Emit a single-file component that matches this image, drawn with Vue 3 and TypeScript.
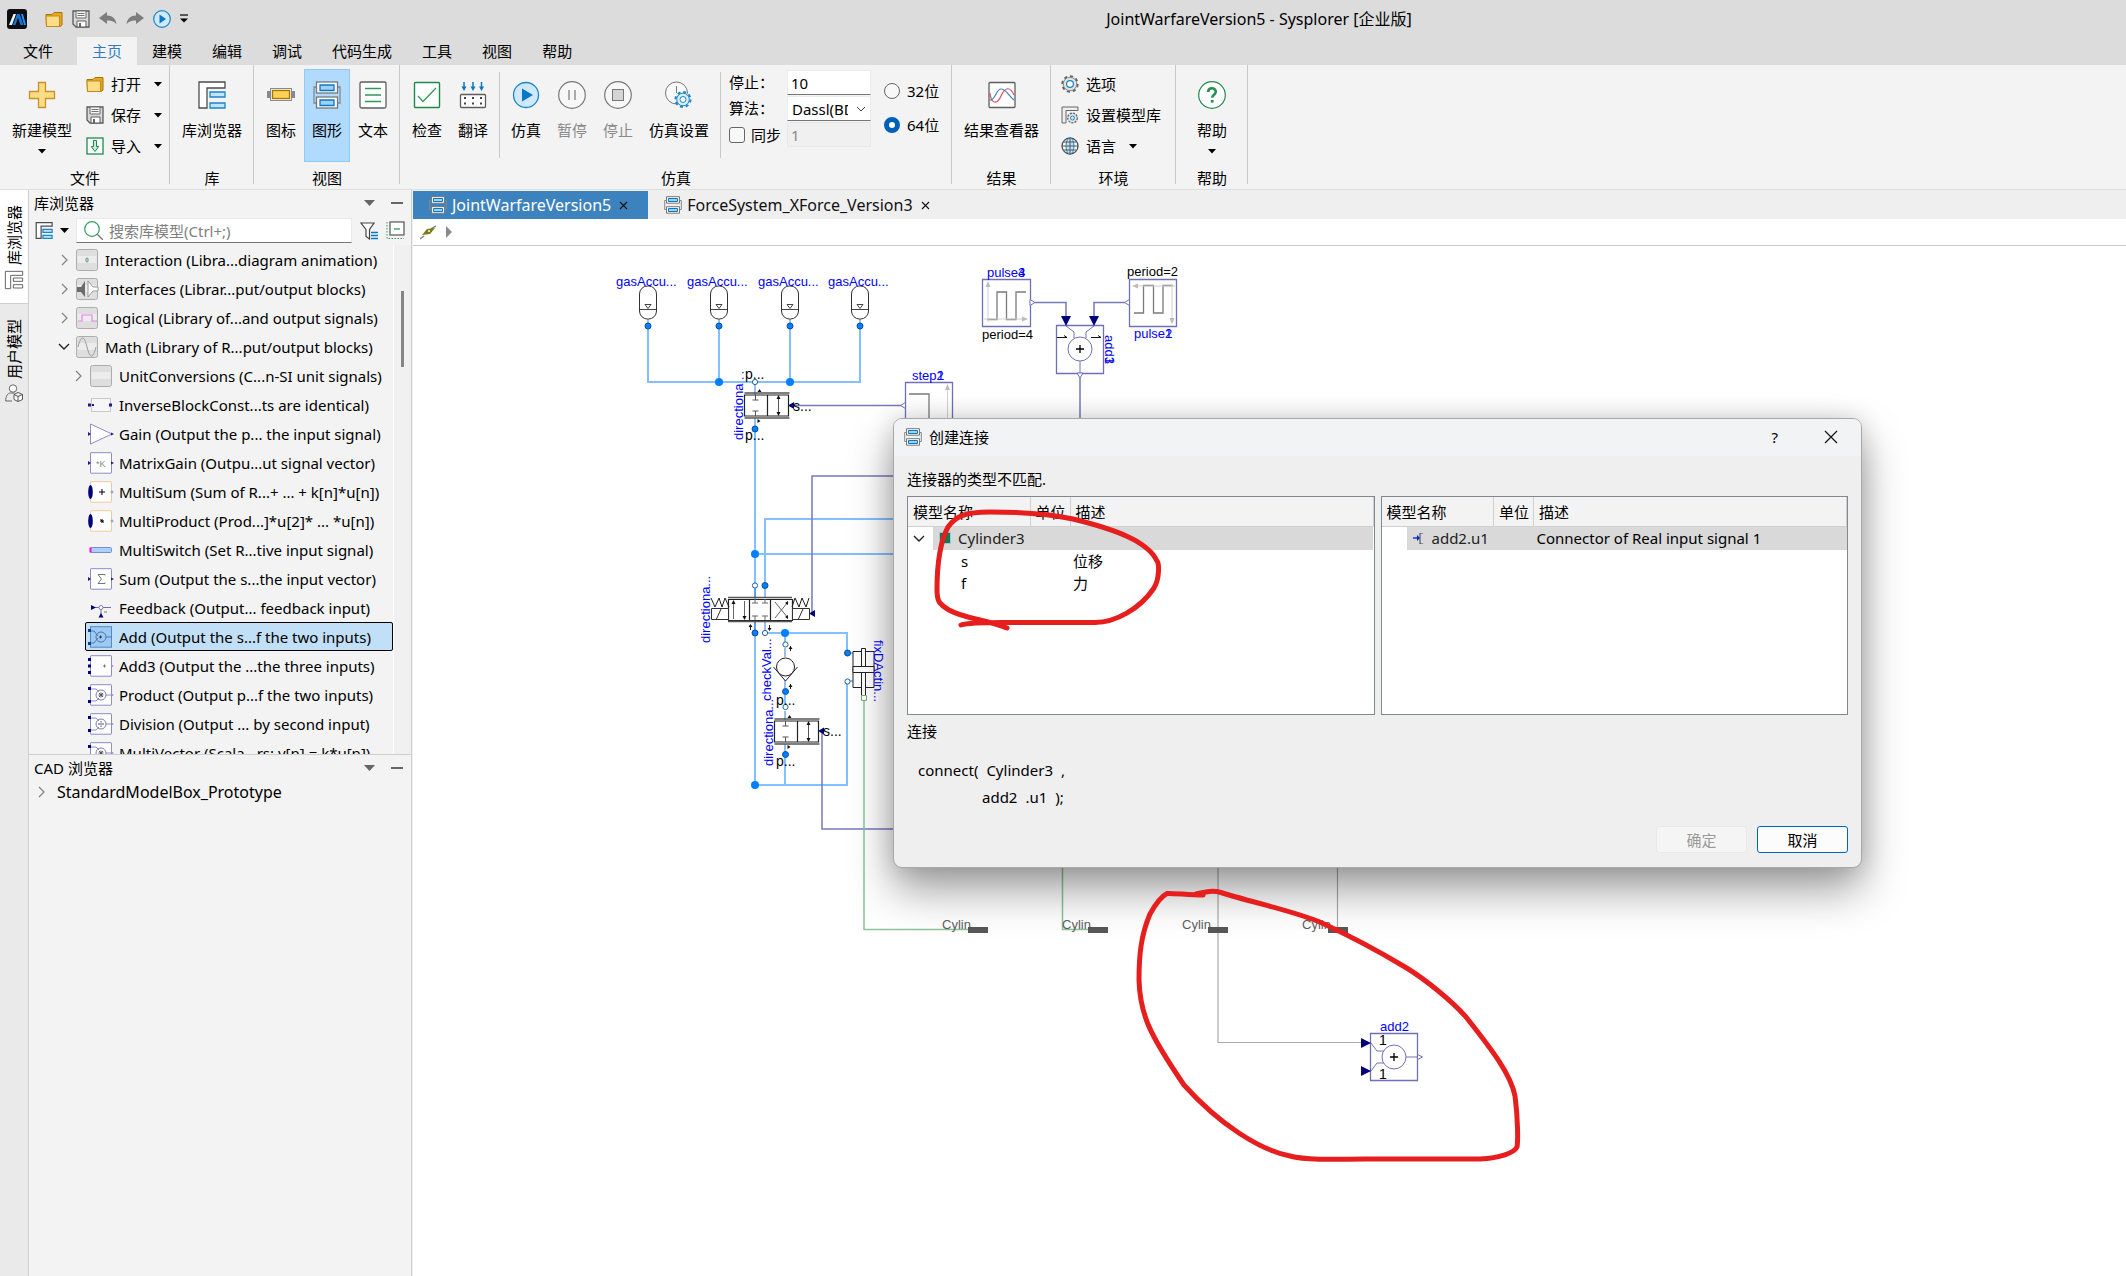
<script setup lang="ts">
import { h, ref } from 'vue'

const icons: Record<string, string> = {
  logo: '<rect width="20" height="20" rx="3" fill="#0d0f12"/><path d="M2 16 6.500 5H9L5 16z" fill="#eef2f6"/><path d="M6 16 10 5h2.500L16.500 16H13.500L11 8.500 8.500 16z" fill="#1476d8"/><path d="M14 5h2l3 11h-2z" fill="#1e90ff"/>',
  folder: '<path d="M1 4.500h6l2-2h8V15l-2 1.500H1.500z" fill="#e6a826" stroke="#a87400"/><path d="M1 6h13.500v10.500H1.500z" fill="#fcdc84" stroke="#c18b14"/>',
  save: '<path d="M1 1h16v16H4l-3-3z" fill="#d9d9d9" stroke="#5b5b5b" stroke-width="1.300"/><path d="M4 1h10v7H4z" fill="#f5f5f5" stroke="#6b6b6b"/><path d="M5.500 3.500h7M5.500 5.500h7" stroke="#777"/><path d="M5 11h9v6H5z" fill="#fff" stroke="#5b5b5b"/><path d="M7 13h2v4H7z" fill="#666"/>',
  undo: '<path d="M0 8 8 2v3.500c5 0 9 3 9.500 9C15.500 11.500 13 10.500 8 10.500V14z" fill="#7d7d7d"/>',
  redo: '<path d="M18 8 10 2v3.500c-5 0-9 3-9.500 9C2.500 11.500 5 10.500 10 10.500V14z" fill="#7d7d7d"/>',
  play: '<circle cx="9" cy="9" r="8.300" fill="#cfe8fb" stroke="#1886c8" stroke-width="1.200"/><path d="M6.500 4.500 13 9l-6.500 4.500z" fill="#0878c4"/>',
  more: '<path d="M0 1h8" stroke="#000" stroke-width="1.200"/><path d="M0 4.500h8l-4 4z" fill="#000"/>',
  caret: '<path d="M0 0h8L4 4.500z" fill="#000"/>',
  menuCaret: '<path d="M0 0h11L5.500 6z" fill="#666"/>',
  plus: '<path d="M11.500 2.500h7v9h9v7h-9v9h-7v-9h-9v-7h9z" fill="#fbdb84" stroke="#c8922a" stroke-width="1.300"/>',
  importing: '<rect x="1" y="1" width="16" height="16" fill="#fff" stroke="#1d8a4c" stroke-width="1.300"/><path d="M7.500 3.500h3v6h2.200L9 14.500 5.300 9.500h2.200z" fill="#c9ecd6" stroke="#1d8a4c"/>',
  library: '<path d="M2 2h26v6H10v20H2z" fill="#fff" stroke="#4d4d4d" stroke-width="1.300"/><path d="M13 12h15v5H13zM13 23h15v5H13z" fill="#c4e2fa" stroke="#1886c8" stroke-width="1.300"/>',
  iconview: '<path d="M1 11h4v7H1zM25 11h4v7h-4z" fill="#888"/><rect x="4.500" y="8.500" width="21" height="12" fill="#f4f4f4" stroke="#8a8a8a"/><rect x="6.500" y="10.500" width="17" height="8" fill="#ffd257" stroke="#a77400" stroke-width="1.300"/>',
  diagram: '<path d="M4 7H2v16h2M26 7h2v16h-2" fill="none" stroke="#888" stroke-width="1.300"/><rect x="4.500" y="2" width="21" height="11" fill="#fff" stroke="#777" stroke-width="1.300"/><rect x="4.500" y="17" width="21" height="11" fill="#fff" stroke="#777" stroke-width="1.300"/><path d="M8 5h14v5.500H8zM8 20h14v5.500H8z" fill="#9fd0f5" stroke="#0d78c0" stroke-width="1.300"/>',
  diagramSmall: '<path d="M2.500 4.500H.7v9h1.800M15.500 4.500h1.800v9h-1.800" fill="none" stroke="#888"/><path d="M2.500.7h13v6.500h-13zM2.500 10.700h13v6.500h-13z" fill="#fff" stroke="#777"/><path d="M4.500 2.500h9v3h-9zM4.500 12.500h9v3h-9z" fill="#9fd0f5" stroke="#0d78c0"/>',
  textview: '<rect x="2" y="2" width="26" height="26" rx="1.500" fill="#fff" stroke="#5e5e5e" stroke-width="1.300"/><path d="M7 8.500h16M7 15h16M7 21.500h16" stroke="#2d9a58" stroke-width="1.300"/>',
  check: '<rect x="2.500" y="2.500" width="25" height="25" rx="1" fill="#fff" stroke="#1d8a4c" stroke-width="1.400"/><path d="m6 16 5 5.500L24 8" fill="none" stroke="#2d9a58" stroke-width="1.300"/>',
  translate: '<path d="M6 2v7M15 2v7M23.500 2v7" stroke="#0878c4" stroke-width="1.500"/><path d="M3.500 6.500h5L6 11zM12.500 6.500h5L15 11zM21 6.500h5L23.500 11z" fill="#0878c4"/><rect x="2.500" y="14.500" width="25" height="13" rx="1" fill="#fff" stroke="#5e5e5e" stroke-width="1.300"/><path d="M6 18h2M14 18h2M22 18h2M6 23.500h2M14 23.500h2M22 23.500h2" stroke="#444" stroke-width="2"/>',
  simulate: '<circle cx="15" cy="15" r="12.500" fill="#cfe8fb" stroke="#1886c8" stroke-width="1.300"/><path d="m11 8.500 11 6.500-11 6.500z" fill="#0878c4"/>',
  pause: '<circle cx="15" cy="15" r="13.300" fill="#f7f7f7" stroke="#777" stroke-width="1.200"/><path d="M12 10v10M18 10v10" stroke="#aaa" stroke-width="2"/>',
  stop: '<circle cx="15" cy="15" r="13.300" fill="#f7f7f7" stroke="#777" stroke-width="1.200"/><rect x="9.500" y="9.500" width="11" height="11" fill="#d5d5d5" stroke="#777"/>',
  simset: '<circle cx="12.500" cy="13" r="11" fill="#f9f9f9" stroke="#777"/><path d="M12.500 6v7" stroke="#777"/><circle cx="19" cy="19.500" r="7.500" fill="#d9edfc" stroke="#1886c8" stroke-width="2" stroke-dasharray="3 2.900"/><circle cx="19" cy="19.500" r="6.300" fill="#d9edfc" stroke="#1886c8"/><circle cx="19" cy="19.500" r="3" fill="#fff" stroke="#1886c8"/>',
  result: '<rect x="2" y="2.500" width="26" height="25" rx="1" fill="#fff" stroke="#5e5e5e" stroke-width="1.300"/><path d="M3 13c1 11 7 12 11 3s9-10 13-1" fill="none" stroke="#dd4b5c" stroke-width="1.200"/><path d="M3 20c5 1 6-11 11-11s7 6 13 11" fill="none" stroke="#3b82c0" stroke-width="1.200"/>',
  gear: '<circle cx="9" cy="9" r="7.700" fill="#e2e2e2" stroke="#666" stroke-width="2" stroke-dasharray="3.200 2.800"/><circle cx="9" cy="9" r="6.700" fill="#e2e2e2" stroke="#777" stroke-width=".8"/><circle cx="9" cy="9" r="3.400" fill="#fff" stroke="#1886c8" stroke-width="1.200"/>',
  setlib: '<path d="M1 1h16v3.500H5V17H1z" fill="#eee" stroke="#666"/><circle cx="11.500" cy="12" r="4.800" fill="#e6e6e6" stroke="#666" stroke-width="1.300" stroke-dasharray="2.200 1"/><circle cx="11.500" cy="12" r="2" fill="#d9edfc" stroke="#1886c8"/>',
  globe: '<circle cx="9" cy="9" r="8" fill="#fff" stroke="#4d4d4d" stroke-width="1.300"/><ellipse cx="9" cy="9" rx="4" ry="8" fill="#c4e2fa" stroke="#1886c8"/><path d="M9 1v16M1 9h16M2.500 5h13M2.500 13h13" stroke="#555"/>',
  help: '<circle cx="15" cy="15" r="13.300" fill="#fff" stroke="#1d8a4c" stroke-width="1.200"/><path d="M11.200 12c0-5 7.600-4.800 7.600-.3 0 3-3.600 3-3.600 6" fill="none" stroke="#23924f" stroke-width="2.600"/><path d="M13.800 20h2.800v2.600h-2.800z" fill="#23924f"/>',
  search: '<circle cx="8" cy="8" r="7.300" fill="none" stroke="#3aa05f" stroke-width="1.300"/><path d="m13 13 6 6" stroke="#777" stroke-width="1.300"/>',
  filter: '<path d="M1 1h13L9.500 7.500V17L6 14.500v-7z" fill="#fff" stroke="#444" stroke-width="1.200"/><path d="M11 10.500h7M11 13.500h7M11 16.500h7" stroke="#0878c4" stroke-width="1.300"/>',
  collapse: '<rect x="4" y="1" width="14" height="13" fill="#fff" stroke="#555" stroke-width="1.200"/><path d="M8 8h6" stroke="#2d9a58" stroke-width="1.300"/><path d="M1 1v16.500h17" fill="none" stroke="#2d9a58" stroke-dasharray="1.500 1.500"/>',
  user: '<circle cx="8" cy="4.500" r="3.700" fill="#fff" stroke="#666"/><path d="M7 17H.7c0-5 2-8 5-8h4" fill="none" stroke="#666"/><path d="m13 8.500 4.500 2v5L13 17.500 9 15.500v-5zM9 10.500l4 2 4.500-2M13 12.500v5" fill="#fff" stroke="#555"/>',
  chevRight: '<path d="m1 1 5 5-5 5" fill="none" stroke="#858585" stroke-width="1.300"/>',
  chevDown: '<path d="m1 1 5 5 5-5" fill="none" stroke="#222" stroke-width="1.400"/>',
  minus: '<path d="M0 1h12" stroke="#666" stroke-width="2"/>',
  close: '<path d="m1 1 7 7M8 1 1 8" stroke="currentColor" stroke-width="1.100"/>',
  closeBig: '<path d="m1 1 12 12M13 1 1 13" stroke="#111" stroke-width="1.200"/>',
  wire: '<path d="M0 14 4 11M11 4l5-3" stroke="#888" stroke-width="1.500"/><path d="m2 10 5-6 8-1-5 6z" fill="#7d7a12"/><circle cx="9" cy="6" r="1" fill="#fff"/>',
  crumb: '<path d="M0 0v12l6-6z" fill="#8a8a8a"/>',
  input: '<path d="M0 5h5" stroke="#0020d0" stroke-width="1.300"/><path d="m4 2 3 3-3 3z" fill="#0020d0"/><path d="M10 0H7v11h3" fill="none" stroke="#345"/>',
}

const grey = '<rect x="3.500" y=".5" width="21" height="21" rx="2" fill="#dedede" stroke="#adadad"/><rect x="4.500" y="7" width="19" height="7" fill="#ececec"/>'
const box = (stroke = '#8c8cc6') => `<rect x="3.500" y=".7" width="21" height="20.500" rx=".5" fill="#fff" stroke="${stroke}"/>`
const ports = '<path d="M1 3h3v3H1zM1 16h3v3H1z" fill="#00007f"/><path d="M24 9.500l3 1.500-3 1.500z" fill="#8c8cc6"/>'
const single = '<path d="M1 9v4l3-2zM24 9.500l3 1.500-3 1.500z" fill="#1a1a8c"/>'
const adder = '<path d="M4 5h5l3 3M4 17h5l3-3M19 11h6" fill="none" stroke="#8c8cc6"/><circle cx="14" cy="11" r="5" fill="none" stroke="#7a7ac0"/>'
Object.assign(icons, {
  tInteraction: grey + '<rect x="13" y="9" width="2" height="4" rx="1" fill="none" stroke="#5c8f87"/>',
  tInterfaces: grey + '<path d="M4 9h4l4-6v16l-4-5H4z" fill="#6b6b6b"/><path d="M15 3l5 6h5v4h-5l-5 6z" fill="#fff" stroke="#999"/>',
  tLogical: grey + '<path d="M5 14h4V8h10v6h5" fill="none" stroke="#ee82ee" stroke-width="1.200"/>',
  tMath: grey + '<path d="M5 11c3-12 6-12 9 0s6 12 9 0" fill="none" stroke="#999"/>',
  tUnit: grey,
  tInverse: '<rect x="4.500" y="4.500" width="19" height="13" fill="#f6f6f6" stroke="#c8c8c8"/><path d="M1 9.500h3v3H1zM5 10h2v2H5zM22 9.500h3v3h-3z" fill="#1a1a8c"/>',
  tGain: '<path d="M3.500 1v20L25 11z" fill="#fff" stroke="#8c8cc6"/>' + single,
  tMatrix: box() + single + '<text x="9" y="14.500" font-size="9" font-family="Liberation Sans" fill="#888">*K</text>',
  tMultiSum: box('#f0c8a0') + '<ellipse cx="3.500" cy="11" rx="2.300" ry="7" fill="#00007f"/><path d="M12 11h6M15 8v6" stroke="#000"/><circle cx="25" cy="11" r="1" fill="none" stroke="#8c8cc6"/>',
  tMultiProd: box('#f0c8a0') + '<ellipse cx="3.500" cy="11" rx="2.300" ry="7" fill="#00007f"/><path d="M13 11h4M15 9v4M13.500 9.500l3 3" stroke="#000"/><circle cx="25" cy="11" r="1" fill="none" stroke="#8c8cc6"/>',
  tSwitch: '<rect x="3.500" y="8.500" width="21" height="5" rx="1" fill="#a8d2fb" stroke="#808cc0"/><path d="M2.500 8.500h2v5h-2z" fill="#f0f"/>',
  tSum: box() + single + '<path d="M18 7.500V6.500h-7l3.500 4.500-3.500 4.500h7v-1" fill="none" stroke="#777"/>',
  tFeedback: '<path d="M4 10.500h20M14 11v9" stroke="#6c6cb8"/><path d="M4 8v5l5-2.500zM11.500 20.500h5L14 16z" fill="#00007f"/><circle cx="14" cy="10.500" r="2" fill="#fff" stroke="#8080a0"/><path d="M17 15h3" stroke="#777"/>',
  tAdd: '<rect x="3.500" y=".7" width="21" height="20.500" fill="#9ccaf2" stroke="#5b86c0"/><path d="M4 5h3l4 5M4 17h3l4-5M19 11h6" fill="none" stroke="#4978b4"/><circle cx="14" cy="11" r="5" fill="none" stroke="#4978b4"/><path d="M1 3h3v3H1zM1 16h3v3H1z" fill="#00459a"/><path d="M12 11h3M13.500 9.500v3" stroke="#334"/>',
  tAdd3: box() + ports + '<path d="M1 9.500h3v3H1z" fill="#00007f"/><path d="M16 11h3M17.500 9.500v3" stroke="#777"/>',
  tProduct: box() + ports + adder + '<path d="M11.500 11h5M14 8.500v5M12 9l4 4M16 9l-4 4" stroke="#555"/>',
  tDivision: box() + ports + adder + '<path d="M11 11h6M14 8v1.500M14 12.500V14" stroke="#555"/>',
})

const Icon = (p: { name: string; w: number; ht?: number }) =>
  h('svg', {
    class: 'ic', width: p.w, height: p.ht ?? p.w, viewBox: `0 0 ${p.w} ${p.ht ?? p.w}`,
    style: 'display:block;flex:none', 'aria-hidden': 'true', innerHTML: icons[p.name],
  })
Icon.props = ['name', 'w', 'ht']

const menus = ['文件', '主页', '建模', '编辑', '调试', '代码生成', '工具', '视图', '帮助']
const quick = ['folder', 'save', 'undo', 'redo', 'play']
const fileActions = [['folder', '打开'], ['save', '保存'], ['importing', '导入']]
const envActions = [['gear', '选项'], ['setlib', '设置模型库'], ['globe', '语言']]
const viewButtons = [['iconview', '图标'], ['diagram', '图形'], ['textview', '文本']]

interface Row { icon: string; text: string; deep?: boolean; chev?: string; on?: boolean }
const tree: Row[] = [
  { icon: 'tInteraction', text: 'Interaction (Libra...diagram animation)', chev: 'right' },
  { icon: 'tInterfaces', text: 'Interfaces (Librar...put/output blocks)', chev: 'right' },
  { icon: 'tLogical', text: 'Logical (Library of...and output signals)', chev: 'right' },
  { icon: 'tMath', text: 'Math (Library of R...put/output blocks)', chev: 'down' },
  { icon: 'tUnit', text: 'UnitConversions (C...n-SI unit signals)', chev: 'right', deep: true },
  { icon: 'tInverse', text: 'InverseBlockConst...ts are identical)', deep: true },
  { icon: 'tGain', text: 'Gain (Output the p... the input signal)', deep: true },
  { icon: 'tMatrix', text: 'MatrixGain (Outpu...ut signal vector)', deep: true },
  { icon: 'tMultiSum', text: 'MultiSum (Sum of R...+ ... + k[n]*u[n])', deep: true },
  { icon: 'tMultiProd', text: 'MultiProduct (Prod...]*u[2]* ... *u[n])', deep: true },
  { icon: 'tSwitch', text: 'MultiSwitch (Set R...tive input signal)', deep: true },
  { icon: 'tSum', text: 'Sum (Output the s...the input vector)', deep: true },
  { icon: 'tFeedback', text: 'Feedback (Output... feedback input)', deep: true },
  { icon: 'tAdd', text: 'Add (Output the s...f the two inputs)', deep: true, on: true },
  { icon: 'tAdd3', text: 'Add3 (Output the ...the three inputs)', deep: true },
  { icon: 'tProduct', text: 'Product (Output p...f the two inputs)', deep: true },
  { icon: 'tDivision', text: 'Division (Output ... by second input)', deep: true },
  { icon: 'tProduct', text: 'MultiVector (Scala...rs: y[n] = k*u[n])', deep: true },
]

const accumulators = [648, 719, 790, 860]
const cylinders = [942, 1062, 1182, 1302]
const stopTime = ref('10')
const bits = ref('64')
</script>

<template>
  <div class="app">
    <header class="titlebar">
      <Icon name="logo" :w="20" />
      <div class="quick">
        <button v-for="q in quick" :key="q" :aria-label="q"><Icon :name="q" :w="18" /></button>
        <button aria-label="more"><Icon name="more" :w="8" :ht="9" /></button>
      </div>
      <h1>JointWarfareVersion5 - Sysplorer [企业版]</h1>
    </header>

    <nav class="menubar">
      <button v-for="m in menus" :key="m" :class="{ on: m === '主页' }">{{ m }}</button>
    </nav>

    <section class="ribbon">
      <div class="group">
        <div class="tools">
          <button class="big wide"><Icon name="plus" :w="30" /><span>新建模型</span><Icon name="caret" :w="8" :ht="5" /></button>
          <div class="stack">
            <button v-for="[i, t] in fileActions" :key="t" class="small"><Icon :name="i" :w="18" /><span>{{ t }}</span><Icon name="caret" :w="8" :ht="5" /></button>
          </div>
        </div>
        <div class="caption">文件</div>
      </div>
      <div class="sep"></div>
      <div class="group">
        <div class="tools"><button class="big wide"><Icon name="library" :w="30" /><span>库浏览器</span></button></div>
        <div class="caption">库</div>
      </div>
      <div class="sep"></div>
      <div class="group">
        <div class="tools">
          <button v-for="[i, t] in viewButtons" :key="t" class="big" :class="{ on: t === '图形' }"><Icon :name="i" :w="30" /><span>{{ t }}</span></button>
        </div>
        <div class="caption">视图</div>
      </div>
      <div class="sep"></div>
      <div class="group">
        <div class="tools">
          <button class="big"><Icon name="check" :w="30" /><span>检查</span></button>
          <button class="big"><Icon name="translate" :w="30" /><span>翻译</span></button>
          <div class="minisep"></div>
          <button class="big"><Icon name="simulate" :w="30" /><span>仿真</span></button>
          <button class="big" disabled><Icon name="pause" :w="30" /><span>暂停</span></button>
          <button class="big" disabled><Icon name="stop" :w="30" /><span>停止</span></button>
          <button class="big wide"><Icon name="simset" :w="30" /><span>仿真设置</span></button>
          <div class="minisep"></div>
          <div class="fields">
            <label for="stop">停止：</label><input id="stop" v-model="stopTime" type="text">
            <label for="algo">算法：</label>
            <div class="pick"><select id="algo"><option>Dassl(BDF/Adams)</option></select><svg width="10" height="6"><path d="m1 1 4 4 4-4" fill="none" stroke="#444" /></svg></div>
            <label class="tick"><input type="checkbox"><span>同步</span></label><input type="text" value="1" disabled aria-label="同步">
          </div>
          <div class="radios">
            <label><input v-model="bits" type="radio" value="32">32位</label>
            <label><input v-model="bits" type="radio" value="64">64位</label>
          </div>
        </div>
        <div class="caption">仿真</div>
      </div>
      <div class="sep"></div>
      <div class="group">
        <div class="tools"><button class="big widest"><Icon name="result" :w="30" /><span>结果查看器</span></button></div>
        <div class="caption">结果</div>
      </div>
      <div class="sep"></div>
      <div class="group">
        <div class="tools">
          <div class="stack env">
            <button v-for="[i, t] in envActions" :key="t" class="small"><Icon :name="i" :w="18" /><span>{{ t }}</span><Icon v-if="t === '语言'" name="caret" :w="8" :ht="5" /></button>
          </div>
        </div>
        <div class="caption">环境</div>
      </div>
      <div class="sep"></div>
      <div class="group">
        <div class="tools"><button class="big help"><Icon name="help" :w="30" /><span>帮助</span><Icon name="caret" :w="8" :ht="5" /></button></div>
        <div class="caption">帮助</div>
      </div>
      <div class="sep"></div>
    </section>

    <div class="work">
      <aside class="rail">
        <button class="on"><span>库浏览器</span><svg width="20" height="20" viewBox="0 0 30 30"><path d="M2 2h26v6H10v20H2z" fill="#fff" stroke="#666" stroke-width="1.500" /><path d="M14 12h14v5H14zM14 22h14v5H14z" fill="#fff" stroke="#666" stroke-width="1.500" /></svg></button>
        <button><span>用户模型</span><Icon name="user" :w="19" /></button>
      </aside>

      <aside class="side">
        <div class="panelhead"><span>库浏览器</span><Icon name="menuCaret" :w="11" :ht="6" /><Icon name="minus" :w="12" :ht="2" /></div>
        <div class="searchrow">
          <button class="mode" aria-label="视图"><svg width="19" height="19" viewBox="0 0 30 30"><path d="M2 2h26v6H10v20H2z" fill="#fff" stroke="#4d4d4d" stroke-width="2" /><path d="M13 13h15v5H13zM13 23h15v5H13z" fill="#c4e2fa" stroke="#1886c8" stroke-width="2" /></svg><svg width="9" height="5"><path d="M0 0h9L4.500 5z" /></svg></button>
          <div class="searchbox"><Icon name="search" :w="19" /><input type="text" placeholder="搜索库模型(Ctrl+;)" aria-label="搜索库模型"></div>
          <button aria-label="筛选"><Icon name="filter" :w="18" /></button>
          <button aria-label="折叠"><Icon name="collapse" :w="19" /></button>
        </div>
        <div class="treewrap">
          <ul class="tree">
            <li v-for="r in tree" :key="r.text" :class="{ deep: r.deep, on: r.on }">
              <span class="chev"><Icon v-if="r.chev === 'right'" name="chevRight" :w="7" :ht="12" /><Icon v-if="r.chev === 'down'" name="chevDown" :w="12" :ht="7" /></span>
              <span class="row"><Icon :name="r.icon" :w="28" :ht="22" /><span>{{ r.text }}</span></span>
            </li>
          </ul>
          <div class="scroll"><i></i></div>
        </div>
        <div class="cad">
          <div class="panelhead"><span>CAD 浏览器</span><Icon name="menuCaret" :w="11" :ht="6" /><Icon name="minus" :w="12" :ht="2" /></div>
          <div class="cadrow"><Icon name="chevRight" :w="7" :ht="12" /><span>StandardModelBox_Prototype</span></div>
        </div>
      </aside>

      <main class="doc">
        <div class="tabs">
          <button class="tab on"><Icon name="diagramSmall" :w="18" /><span>JointWarfareVersion5</span><Icon name="close" :w="9" /></button>
          <button class="tab"><Icon name="diagramSmall" :w="18" /><span>ForceSystem_XForce_Version3</span><Icon name="close" :w="9" /></button>
        </div>
        <div class="crumbs"><Icon name="wire" :w="16" :ht="15" /><Icon name="crumb" :w="6" :ht="12" /></div>

        <div class="canvas">
          <svg class="sheet" width="100%" height="100%">
            <defs>
              <g id="valve2" fill="none" stroke="#222">
                <path d="M0 0h44v21H0zM23 0v21" fill="#fff" stroke-width="1.200" />
                <path d="M0-2h45M0 23h45" stroke="#555" stroke-width="1.500" />
                <path d="M8 5h6M11 0v5M8 16h6M11 16v5M34 2v17" stroke="#555" />
                <path d="m34 0 2 4h-4zM34 21l2-4h-4zM13-3l2-3 2 3zM13 24l3 2-3 2z" fill="#111" stroke="none" />
              </g>
            </defs>
            <g transform="translate(-413 -246)">
              <g fill="none" stroke="#82c0ff" stroke-width="2">
                <path d="M648 326v56h212v-56M719 326v56M790 326v56M755 429v204M755 633v152h92v-104M894 519H765v66M755 554h139M765 633h82v20M785 633v11M785 755v30M785 695v10" />
              </g>
              <g fill="none" stroke="#2f7fdc">
                <path d="M755 382v13M755 418v8M755 589v8M765 589v8M755 621v9M765 621v9M785 648v9M785 680v8M785 711v9M785 744v8M848 653h5M848 681h5" />
              </g>
              <g v-for="x in accumulators" :key="x">
                <path :d="`M${x} 319v7`" stroke="#2f7fdc" />
                <rect :x="x - 8.500" y="286" width="17" height="33" rx="8" fill="#fff" stroke="#333" />
                <path :d="`M${x - 8} 309.500h16M${x - 3} 304.500h6l-3 4z`" fill="none" stroke="#444" />
                <circle :cx="x" cy="326" r="3" class="port" />
                <text :x="x - 32" y="286">gasAccu...</text>
              </g>
              <g fill="#0080ff"><circle cx="719" cy="382" r="4" /><circle cx="790" cy="382" r="4" /><circle cx="755" cy="554" r="4" /><circle cx="785" cy="633" r="4" /><circle cx="755" cy="785" r="4" /></g>

              <g fill="none" stroke="#7878bc" stroke-width="1.500">
                <path d="M794 405.500H901M894 476H812v137M822 731v98h72M1035 302.500h31V318M1125 302.500h-31V318M1080 377v45" />
              </g>
              <g fill="none" stroke="#8cc496" stroke-width="1.500"><path d="M864 700v229.500h104M1062.500 860v69.500H1088" /></g>
              <g fill="none" stroke="#aaa" stroke-width="1.200"><path d="M1218 860v182.500h145M1337.500 860v68" /></g>

              <use href="#valve2" x="744.500" y="395" />
              <use href="#valve2" x="774.500" y="721" />
              <path d="m788 405.500 6-3.500v7zM809 613.500l6-3.500v7zM818 731l6-3.500v7z" fill="#00007f" />

              <g fill="none" stroke="#222">
                <path d="M728.500 599.500h64v21h-64zM749.500 599.500v21M770.500 599.500v21" fill="#fff" stroke-width="1.200" />
                <path d="M728 597.500h64M728 621.500h64" stroke="#555" stroke-width="1.500" />
                <path d="M711.500 608.500h17v11h-17zM792.500 608.500h17v11h-17zM716 620l5-11M798 620l5-11" fill="#fff" stroke="#333" />
                <path d="m711 598 4 9 4-9 3 9 3-9 4 9M792 607l3-9 4 9 3-9 4 9 3-9" />
                <path d="M733.500 601v18M744.500 601v18M752 603h6M755 599v4M752 616h6M755 616v4M762 603h6M765 599v4M762 616h6M765 616v4M775 602l13 16M788 602l-13 16" stroke="#666" />
                <path d="m733.500 600 2 4h-4zM744.500 620l2-4h-4zM788 601v4l-3-2zM788 619v-4l-3 2z" fill="#111" stroke="none" />
                <path d="M750.500 630v-5M769.500 625v5M790.500 651v-5M790.500 689v-5" />
                <path d="m748.500 627 2-3 2 3zM767.500 628l2 3 2-3zM788.500 649l2-3 2 3zM788.500 687l2-3 2 3z" fill="#111" stroke="none" />
                <circle cx="785.500" cy="667" r="9" fill="#fff" /><path d="m773.500 667 12 14 12-14" />
                <path d="M853 651.500h21v36h-21z" fill="#fff" /><path d="M861.500 648.500h4v47h-4z" fill="#fff" /><path d="M853 666.500h21v6h-21z" fill="#fff" />
                <path d="M861.500 695.500h5v5h-5z" fill="#fff" stroke="#6cb474" />
              </g>
              <g class="port"><circle cx="755" cy="429" r="3" /><circle cx="765" cy="585.500" r="3" /><circle cx="755" cy="633" r="3" /><circle cx="785.500" cy="691.500" r="3" /><circle cx="785.500" cy="754.500" r="3" /><circle cx="847.500" cy="653" r="3" /></g>
              <g fill="#fff" stroke="#1c5fa8"><circle cx="755" cy="382" r="2.600" /><circle cx="755" cy="585.500" r="2.600" /><circle cx="765" cy="633" r="2.600" /><circle cx="785.500" cy="644.500" r="2.600" /><circle cx="785.500" cy="707" r="2.600" /><circle cx="847.500" cy="681.500" r="2.600" /></g>

              <g class="k">
                <text x="745" y="379">p...</text><text x="745" y="440">p...</text><text x="793" y="411">s...</text>
                <text x="776" y="705">p...</text><text x="776" y="766">p...</text><text x="823" y="736">s...</text>
              </g>
              <text x="741" y="379">:</text>
              <text transform="translate(743 440) rotate(-90)">directiona</text>
              <text transform="translate(710 643) rotate(-90)">directiona...</text>
              <text transform="translate(771 701) rotate(-90)">checkVal...</text>
              <text transform="translate(773 766) rotate(-90)">directiona...</text>
              <text transform="translate(874 640) rotate(90)">fixDActin...</text>

              <g fill="#fff" stroke="#7070b8">
                <path d="M982.500 279.500h48v47h-48zM1129.500 279.500h47v47h-47zM1056.500 325.500h47v48h-47zM905.500 382.500h47v47h-47zM1370.500 1033.500h47v47h-47z" stroke-width="1.300" />
                <path d="m1030 299.500 5 3-5 3zM1129.500 299.500l-5 3 5 3zM1077 373l3 5 3-5zM905.500 402.500l-5 3 5 3zM1417.500 1054.500l5 2.500-5 2.500z" />
                <path d="M1066 326l8 6v6M1094 326l-8 6v6M1080 361v12M1371 1043l6 8h8M1371 1071l6-8h8M1406 1057h12" fill="none" />
                <circle cx="1080" cy="349" r="12" /><circle cx="1394" cy="1057" r="12" />
              </g>
              <path d="M1061 316h10l-5 10zM1089 316h10l-5 10zM1361 1038v10l10-5zM1361 1066v10l10-5z" fill="#00007f" />
              <g fill="none" stroke="#7a7a7a" stroke-width="1.300">
                <path d="M987 319.500h10V292h9.500v27.500h9.500V292h10M1134 313h9.500v-27.500h10V313h9.500v-27.500h10M909 394h20v30" />
                <path d="M988 322v-38M984 319h40M1172 284v36M1175 286h-40M947.500 430v-42" stroke="#d0d0d0" stroke-width="1" />
              </g>
              <path d="m988 281 2.500 6h-5zM1028 319l-6 2.500v-5zM1172 324l2.500-6h-5zM1132 286l6-2.500v5zM947.500 384l2.500 6h-5z" fill="#bbb" />
              <path d="M1076 349h8M1080 345v8M1390 1057h8M1394 1053v8" stroke="#000" stroke-width="1.300" />
              <path d="M1057 337.500h10l-3-2M1091 337.500h10l-3-2" fill="none" stroke="#111" />
              <text x="982" y="339" fill="#000">period=4</text><text x="1127" y="276" fill="#000">period=2</text>
              <g class="k"><text x="1379" y="1045">1</text><text x="1379" y="1079">1</text></g>
              <text x="987" y="277">pulse3</text><text x="1018" y="277">4</text>
              <text x="1134" y="338">pulse2</text><text x="1165" y="338">1</text>
              <text x="912" y="380">step2</text><text x="937" y="380">1</text>
              <text transform="translate(1105 335) rotate(90)">add3</text><text transform="translate(1105 357) rotate(90)">1</text>
              <text x="1380" y="1031">add2</text>
              <g v-for="x in cylinders" :key="x"><text :x="x" y="929" fill="#606060">Cylin</text><path :d="`M${x + 26} 927h20v6h-20z`" fill="#585858" /></g>
            </g>
          </svg>

          <section class="dialog" role="dialog" aria-label="创建连接">
            <header><Icon name="diagramSmall" :w="18" /><span>创建连接</span><button>?</button><button aria-label="关闭"><Icon name="closeBig" :w="14" /></button></header>
            <div class="dbody">
              <p>连接器的类型不匹配.</p>
              <div class="pair">
                <div class="list left">
                  <table>
                    <colgroup><col class="c1"><col class="c2"><col></colgroup>
                    <thead><tr><th>模型名称</th><th>单位</th><th>描述</th></tr></thead>
                    <tbody>
                      <tr class="sel"><td><span class="cell"><Icon name="chevDown" :w="12" :ht="7" /><i class="sq"></i>Cylinder3</span></td><td></td><td></td></tr>
                      <tr><td class="sub">s</td><td></td><td>位移</td></tr>
                      <tr><td class="sub">f</td><td></td><td>力</td></tr>
                    </tbody>
                  </table>
                </div>
                <div class="list right">
                  <table>
                    <colgroup><col class="c1"><col class="c2"><col></colgroup>
                    <thead><tr><th>模型名称</th><th>单位</th><th>描述</th></tr></thead>
                    <tbody><tr class="sel"><td><span class="cell port-cell"><Icon name="input" :w="10" :ht="11" />add2.u1</span></td><td></td><td>Connector of Real input signal 1</td></tr></tbody>
                  </table>
                </div>
              </div>
              <p class="ctitle">连接</p>
              <div class="code"><div><span>connect(</span><span>Cylinder3</span><span>,</span></div><div class="second"><span>add2</span><span>.u1</span><span>);</span></div></div>
              <div class="actions"><button disabled>确定</button><button class="cancel">取消</button></div>
            </div>
          </section>

          <svg class="pen" width="100%" height="100%">
            <g transform="translate(-413 -246)" fill="none" stroke="#e61e1e" stroke-width="5" stroke-linecap="round" stroke-linejoin="round">
              <path d="M961 625C970 622 990 622.500 1015 622.500H1095C1115 622.500 1140 609 1154 588C1160 578 1159 562 1157 561C1148 542 1118 530 1073 519C1045 513 1020 512 990 512C965 512 956 516 948 527C940 542 937 568 937 590C937 601 939 604 949 610C965 619 985 619 1007 628" />
              <path d="M1203 895C1190 895 1172 893 1167 893.500C1162 896 1155 905 1150 914C1141 935 1139 955 1139 980C1140 1015 1150 1035 1184 1085C1220 1125 1260 1150 1290 1156C1305 1160 1330 1159.500 1370 1159H1480C1500 1158 1514 1153 1517 1147C1518 1142 1518 1118 1515 1096C1511 1075 1493 1051 1466 1017C1452 1001 1425 979 1405 967C1380 952 1350 936 1322 923C1295 911 1250 902 1221 892.500C1212 890 1205 892 1196 894" />
            </g>
          </svg>
        </div>
      </main>
    </div>
  </div>
</template>

<style>
html, body { margin: 0; height: 100%; }
#app { height: 100%; }
</style>

<style scoped>
.app { display: flex; flex-direction: column; min-height: 100vh; overflow: hidden; background: #f3f3f3; color: #000; font: 15px/22px "Noto Sans", "Noto Sans CJK SC", sans-serif; white-space: nowrap; }
button, input, select { font: inherit; color: inherit; border: 0; background: none; margin: 0; padding: 0; }
* { box-sizing: border-box; }
p, h1, ul { margin: 0; padding: 0; list-style: none; }

.titlebar { display: flex; align-items: center; height: 37px; padding-left: 7px; background: #dcdcdc; }
.quick { display: flex; align-items: center; gap: 9px; margin-left: 18px; }
.titlebar h1 { flex: 1; margin-left: 204px; text-align: center; font-size: 16px; font-weight: 400; }
.menubar { display: flex; height: 28px; background: #dcdcdc; }
.menubar button { padding: 0 15px; }
.menubar button:first-child { padding: 0 24px 0 23px; }
.menubar .on { background: #f3f3f3; color: #2f7dc0; }

.ribbon { display: flex; height: 125px; border-bottom: 1px solid #dfdfdf; }
.group { display: flex; flex-direction: column; justify-content: space-between; padding: 4px 3px 0 4px; }
.sep { width: 1px; height: 119px; background: #c8c8c8; }
.minisep { width: 1px; height: 86px; margin: 3px 3px 0; background: #c8c8c8; }
.tools { display: flex; }
.caption { text-align: center; line-height: 22px; }
.big { display: flex; flex-direction: column; align-items: center; width: 46px; height: 93px; padding-top: 11px; }
.big span { margin-top: 9px; }
.big span + .ic { margin-top: 8px; }
.big.wide { width: 76px; }
.big.widest { width: 91px; }
.big.help { width: 64px; }
.big.on { background: #b0dbff; outline: 1px solid #90c8f6; outline-offset: -1px; }
.big:disabled { color: #8a8a8a; }
.stack { display: flex; flex-direction: column; width: 86px; padding-left: 6px; }
.stack.env { width: 117px; }
.small { display: flex; align-items: center; gap: 7px; height: 31px; padding-bottom: 1px; }
.small span + .ic { margin-left: 6px; }
.fields { display: grid; grid-template-columns: 58px 84px; grid-auto-rows: 25px; row-gap: 1px; margin: 1px 0 0 5px; }
.fields > input { height: 25px; width: 84px; padding: 0 3px; background: #fff; border: 1px solid #ececec; border-bottom: 1px solid #777; }
.fields > input:disabled { background: #f0f0f0; border-color: #e8e8e8; color: #8a8a8a; }
.fields label { line-height: 24px; }
.pick { position: relative; }
.pick select { width: 84px; height: 25px; appearance: none; background: #fff; border: 1px solid #ececec; border-bottom: 1px solid #777; padding: 0 22px 0 4px; text-overflow: clip; }
.pick svg { position: absolute; right: 5px; top: 10px; }
.tick { display: flex; align-items: center; gap: 6px; }
.tick input { appearance: none; width: 16px; height: 16px; border: 1px solid #666; border-radius: 3px; background: #f8f8f8; }
.radios { display: flex; flex-direction: column; gap: 12px; width: 64px; margin: 11px 0 0 13px; }
.radios label { display: flex; align-items: center; gap: 7px; }
.radios input { appearance: none; width: 16px; height: 16px; border: 1px solid #666; border-radius: 50%; background: #f8f8f8; }
.radios input:checked { border: 5px solid #005fb8; background: #fff; }

.work { display: flex; flex: 1; }
.rail { width: 29px; background: #eaeaea; border-right: 1px solid #cfcfcf; }
.rail button { display: flex; flex-direction: column; align-items: center; gap: 5px; width: 28px; height: 114px; padding-top: 15px; }
.rail span { writing-mode: vertical-rl; text-orientation: sideways; transform: rotate(180deg); }
.rail .on { background: #fff; border-bottom: 1px solid #cfcfcf; }
.side { display: flex; flex-direction: column; width: 383px; border-right: 1px solid #cfcfcf; background: #f3f3f3; }
.panelhead { display: flex; align-items: center; height: 26px; padding: 0 8px 0 5px; gap: 16px; }
.panelhead span { flex: 1; }
.searchrow { display: flex; align-items: center; height: 29px; padding: 0 6px; gap: 8px; }
.mode { display: flex; align-items: center; gap: 7px; width: 34px; }
.searchbox { display: flex; flex: 1; align-items: center; gap: 6px; height: 25px; margin-left: -1px; padding-left: 7px; background: #fff; border: 1px solid #e8e8e8; border-bottom: 1px solid #777; }
.searchbox input { flex: 1; min-width: 0; outline: 0; }
.searchbox input::placeholder { color: #808080; opacity: 1; }
.treewrap { display: flex; height: 509px; overflow: hidden; }
.tree { width: 364px; }
.tree li { display: flex; align-items: center; height: 29px; padding-left: 28px; }
.tree li.deep { padding-left: 42px; }
.chev { display: flex; justify-content: center; width: 14px; flex: none; }
.row { display: flex; flex: 1; align-items: center; gap: 4px; height: 29px; padding-left: 2px; }
.on .row { background: #c1dff6; outline: 1px solid #000; outline-offset: -1px; border-radius: 2px; }
.scroll { flex: 1; background: #f0f0f0; border-left: 1px solid #fff; padding: 46px 0 0 7px; }
.scroll i { display: block; width: 3px; height: 76px; background: #858585; }
.cad { border-top: 1px solid #cfcfcf; }
.cadrow { display: flex; align-items: center; gap: 12px; padding-left: 9px; font-size: 16px; }

.doc { display: flex; flex: 1; flex-direction: column; min-width: 0; padding-left: 1px; background: #efefef; }
.tabs { display: flex; height: 29px; padding-top: 1px; background: #efefef; font-size: 16px; }
.tab { display: flex; align-items: center; gap: 5px; padding: 0 20px 0 16px; color: #111; }
.tab span + .ic { margin-left: 3px; }
.tab.on { background: #3c82bf; }
.tab.on span { color: #fff; }
.crumbs { display: flex; align-items: center; gap: 10px; height: 27px; padding-left: 7px; background: #fff; border-bottom: 1px solid #c8c8c8; }
.canvas { position: relative; flex: 1; overflow: hidden; background: #fff; }
.sheet, .pen { position: absolute; inset: 0; }
.pen { pointer-events: none; }
.sheet text { font: 13px "Liberation Sans", sans-serif; }
.sheet text:not([fill]) { fill: #00f; }
.sheet .k text { fill: #000; font-size: 14px; }
.port { fill: #0080ff; stroke: #104c94; }

.dialog { position: absolute; left: 480px; top: 172px; width: 969px; border: 1px solid #a8a8a8; border-radius: 9px; background: #efefef; box-shadow: 0 22px 44px rgba(0, 0, 0, .38), 0 0 24px rgba(0, 0, 0, .14); overflow: hidden; }
.dialog header { display: flex; align-items: center; height: 37px; padding: 0 23px 2px 10px; background: #f1f3f5; }
.dialog header span { flex: 1; margin-left: 7px; }
.dialog header button { margin-left: 46px; }
.dbody { padding: 12px 13px 14px; }
.pair { display: flex; gap: 6px; margin-top: 6px; }
.list { flex: 1; height: 219px; border: 1px solid #828790; background: #fff; }
table { width: 100%; table-layout: fixed; border-collapse: collapse; }
.left .c1 { width: 122px; }
.right .c1 { width: 112px; }
.c2 { width: 40px; }
th { height: 29px; padding: 2px 0 0 5px; text-align: left; font-weight: 400; line-height: 24px; background: #f3f3f3; border-right: 1px solid #d0d0d0; border-bottom: 1px solid #d0d0d0; }
td { height: 22px; padding: 0 0 0 3px; }
.sel td { height: 24px; background: #d9d9d9; }
.sel td:first-child { padding: 0; background: linear-gradient(90deg, #fff 25px, #d9d9d9 25px); }
.cell { display: flex; align-items: center; padding-left: 5px; color: #222; }
.port-cell { padding-left: 31px; gap: 9px; }
.sq { width: 12px; height: 12px; margin: 0 7px 0 14px; background: #117a4c; border: 1px solid #9fc8e8; }
td.sub { padding-left: 53px; }
.ctitle { margin-top: 5px; }
.code { padding: 15px 0 0 11px; line-height: 27px; }
.code div { display: flex; gap: 8px; }
.code .second { padding-left: 64px; }
.actions { display: flex; justify-content: flex-end; gap: 10px; margin-top: 15px; }
.actions button { width: 91px; height: 27px; background: #f5f5f5; border: 1px solid #e8e8e8; border-radius: 3px; color: #999; }
.actions .cancel { border-color: #0067b8; background: #fcfcfc; color: #000; }
</style>
